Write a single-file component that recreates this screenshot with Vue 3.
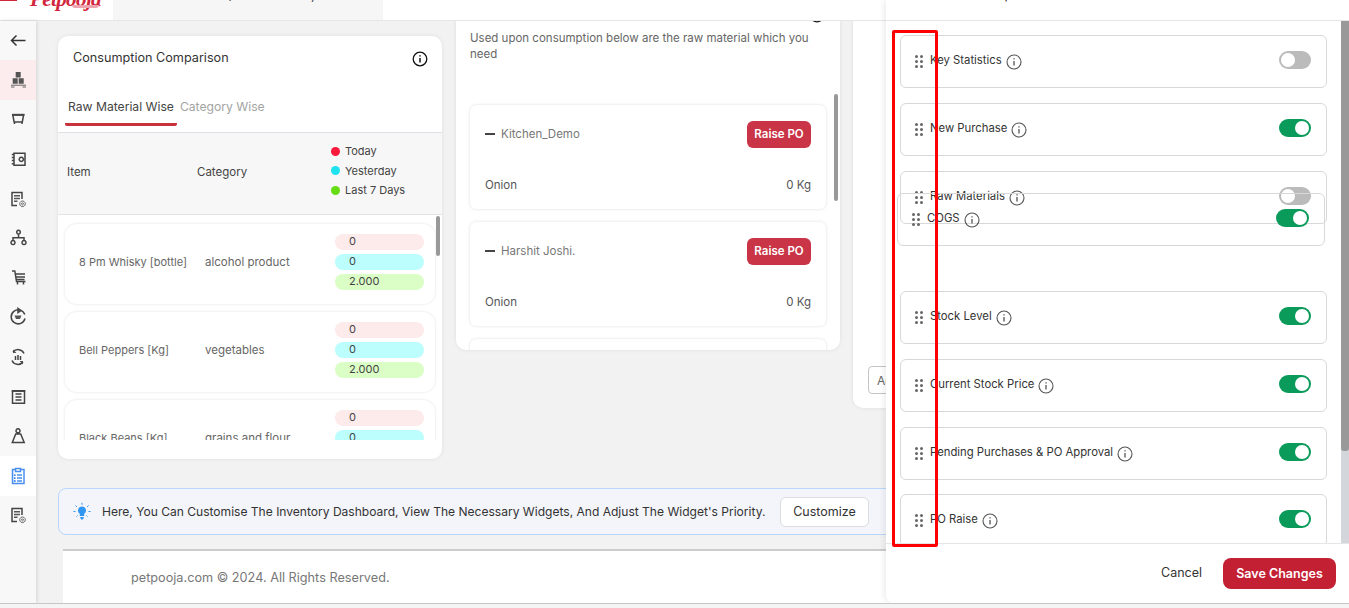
<template>
  <div class="page">
    <!-- top bar, scrolled mostly out of view -->
    <header class="topbar">
      <div class="logo">
        <span class="logo-mark"></span>
        <span class="logo-text">Petpooja</span>
        <span class="logo-swoosh"></span>
      </div>
      <div class="outlet"><span>(Kitchen Demo)</span></div>
    </header>

    <div class="body">
      <aside class="sidebar">
        <div class="side-back">
          <svg viewBox="0 0 20 20" width="20" height="20"><path d="M17.500 9.500H4M8.500 4.500l-5 5 5 5" fill="none" stroke="#333" stroke-width="1.500"/></svg>
        </div>
        <div v-for="(it, i) in sideItems" :key="i" class="side-item" :class="it.state">
          <svg viewBox="0 0 20 20" width="20" height="20">
            <path v-if="it.fill" :d="it.fill" :fill="it.state === 'current' ? '#4a8ff0' : '#555'"/>
            <path v-if="it.line" :d="it.line" fill="none" :stroke="it.state === 'current' ? '#4a8ff0' : '#444'" stroke-width="1.500"/>
            <path v-if="it.thin" :d="it.thin" fill="none" stroke="#666" stroke-width="1"/>
          </svg>
        </div>
      </aside>

      <main class="main">
        <div class="cards">
          <section class="card compare">
            <div class="compare-head">
              <h3>Consumption Comparison</h3>
              <svg class="info dark" viewBox="0 0 16 16" width="16" height="16"><circle cx="8" cy="8" r="6.800" fill="none" stroke="#111" stroke-width="1.300"/><path d="M8 7v4.600M8 4.200v1.400" stroke="#111" stroke-width="1.500"/></svg>
            </div>
            <div class="tabs">
              <span class="tab active">Raw Material Wise</span>
              <span class="tab">Category Wise</span>
            </div>
            <div class="table-head">
              <span class="col-item">Item</span>
              <span class="col-cat">Category</span>
              <div class="legend">
                <div v-for="l in legend" :key="l.label" class="legend-row"><i :style="{ background: l.color }"></i>{{ l.label }}</div>
              </div>
            </div>
            <div class="table-rows">
              <div class="thumb thumb-table"></div>
              <div v-for="r in materials" :key="r.name" class="mat-row">
                <span class="mat-name">{{ r.name }}</span>
                <span class="mat-cat">{{ r.category }}</span>
                <div class="pills">
                  <span class="pill red">0</span>
                  <span class="pill cyan">0</span>
                  <span class="pill green">2.000</span>
                </div>
              </div>
            </div>
          </section>

          <section class="card needs">
            <div class="needs-head">
              <svg viewBox="0 0 16 16" width="16" height="16"><circle cx="8" cy="8" r="6.800" fill="none" stroke="#111" stroke-width="1.300"/></svg>
            </div>
            <p class="needs-text">Used upon consumption below are the raw material which you need</p>
            <div class="needs-list">
              <div class="thumb thumb-needs"></div>
              <div v-for="k in kitchens" :key="k" class="kitchen">
                <div class="kitchen-top">
                  <span class="dash"></span>
                  <span class="kitchen-name">{{ k }}</span>
                  <button class="raise">Raise PO</button>
                </div>
                <div class="kitchen-bottom">
                  <span>Onion</span>
                  <span>0 Kg</span>
                </div>
              </div>
            </div>
          </section>

          <section class="card third">
            <button class="third-btn">Add</button>
          </section>
        </div>

        <div class="banner">
          <svg viewBox="0 0 20 20" width="20" height="20">
            <path d="M10 4.500a4 4 0 0 0-2.200 7.300V14h4.400v-2.200A4 4 0 0 0 10 4.500zM8.300 15h3.400v1.200l-1 1.300H9.300l-1-1.300z" fill="#2f96f3"/>
            <path d="M10 .8v2M3.500 3.500l1.400 1.400M16.500 3.500l-1.400 1.400M1.500 9.500h2M16.500 9.500h2M4.500 14.500l1-1M15.500 14.500l-1-1" stroke="#2f96f3" stroke-width="1"/>
          </svg>
          <span class="banner-text">Here, You Can Customise The Inventory Dashboard, View The Necessary Widgets, And Adjust The Widget's Priority.</span>
          <button class="customize">Customize</button>
        </div>

        <footer class="footer">petpooja.com © 2024. All Rights Reserved.</footer>
      </main>
    </div>

    <!-- customise drawer -->
    <aside class="drawer">
      <div class="drawer-head"><span>Dashboard Setup</span></div>
      <div class="drawer-list">
        <template v-for="w in widgets" :key="w.name">
          <div v-if="w.slot" class="drop-slot"></div>
          <div v-else class="widget">
            <span class="grip"><i v-for="n in 6" :key="n"></i></span>
            <span class="widget-name">{{ w.name }}</span>
            <svg class="info" viewBox="0 0 16 16" width="16" height="16"><circle cx="8" cy="8" r="7" fill="none" stroke="#555" stroke-width="1.100"/><path d="M8 7v4.600M8 4.300v1.300" stroke="#555" stroke-width="1.300"/></svg>
            <span class="toggle" :class="{ on: w.on }"></span>
          </div>
        </template>
        <div class="drawer-track"><div class="drawer-thumb"></div></div>
      </div>
      <div class="drawer-foot">
        <button class="cancel">Cancel</button>
        <button class="save">Save Changes</button>
      </div>

      <!-- row being dragged -->
      <div class="widget ghost">
        <span class="grip"><i v-for="n in 6" :key="n"></i></span>
        <span class="widget-name">COGS</span>
        <svg class="info" viewBox="0 0 16 16" width="16" height="16"><circle cx="8" cy="8" r="7" fill="none" stroke="#555" stroke-width="1.100"/><path d="M8 7v4.600M8 4.300v1.300" stroke="#555" stroke-width="1.300"/></svg>
        <span class="toggle on"></span>
      </div>
    </aside>

    <!-- annotation from the screenshot -->
    <div class="annotation"></div>
  </div>
</template>

<script setup>
const docGear = {
  line: 'M14 10V3.500H4v13h5',
  thin: 'M14.500 12a2.800 2.800 0 1 0 .01 0M14.500 14a.9.9 0 1 0 .01 0',
  fill: 'M6 6h6v1.400H6zM6 8.800h6v1.400H6zM6 11.600h3.500V13H6z'
}

const sideItems = [
  { state: 'active', fill: 'M7.700 2h5v5.500h-5zM4.700 8.300h5v5.500h-5zM10.700 8.300h5v5.500h-5z', thin: 'M3 15.200h15M3 17h3.500M14.500 17H18' },
  { line: 'M4.800 6h10.800l-1.300 7H6.100zM6.500 13v2M14 13v2', fill: 'M4 4.800h12.500v2H4z' },
  { line: 'M6 4.200h11v12H6zM3.800 5.500h2.500M3.800 8.500h2.500M3.800 11.500h2.500M3.800 14.800h2.500M13.300 8.200a2.100 2.100 0 1 1-.01 0' },
  docGear,
  { line: 'M10.500 6v3.500M5 13V9.700h11V13M10.500 2.300a1.800 1.800 0 1 0 .01 0M5 12.500a2 2 0 1 0 .01 0M16 12.500a2 2 0 1 0 .01 0' },
  { line: 'M4 3h2.800l1.700 10.500h9M7.500 6h9.500M8 9h9M8.500 11.500h8M9.500 14v2.500M15.500 14v2.500' },
  { line: 'M16.800 7.500A7 7 0 1 0 17 11.500M10 3V1.500L13 3.500 10 5.500z', fill: 'M6.500 8.500h7l-1.500 3.500H8z' },
  { line: 'M16 6.500A6.500 6.500 0 0 0 5 5M4 13.500A6.500 6.500 0 0 0 15 15M7.500 9v4M10 8v5M12.500 9v4', fill: 'M5 2.500v3.500h3.500zM15 17.500V14h-3.500z' },
  { line: 'M4.500 3.700h12v12.500h-12zM7.500 7h6M7.500 10h6M7.500 13h6', fill: 'M3.800 3h13.400v2H3.800z' },
  { line: 'M7.700 8h5l3.500 8.500H4.300zM10 2.800a2 2 0 1 0 .01 0' },
  { state: 'current', line: 'M7.500 3.500H4.500v14h11.500v-14H13M7.500 2.500h5V5.500h-5zM9 9h5M9 12h5M9 15h5', fill: 'M5.800 8.300h1.800v1.800H5.800zM5.800 11.200h1.800V13H5.800zM5.800 14.100h1.800v1.800H5.800z' },
  docGear
]

const legend = [
  { label: 'Today', color: '#f8193c' },
  { label: 'Yesterday', color: '#1ee3ee' },
  { label: 'Last 7 Days', color: '#66dc12' }
]

const materials = [
  { name: '8 Pm Whisky [bottle]', category: 'alcohol product' },
  { name: 'Bell Peppers [Kg]', category: 'vegetables' },
  { name: 'Black Beans [Kg]', category: 'grains and flour' }
]

const kitchens = ['Kitchen_Demo', 'Harshit Joshi.', 'Outlet']

const widgets = [
  { name: 'Key Statistics', on: false },
  { name: 'New Purchase', on: true },
  { name: 'Raw Materials', on: false },
  { name: 'slot', slot: true },
  { name: 'Stock Level', on: true },
  { name: 'Current Stock Price', on: true },
  { name: 'Pending Purchases & PO Approval', on: true },
  { name: 'PO Raise', on: true }
]
</script>

<style scoped>
.page {
  position: relative;
  width: 1349px;
  height: 604px;
  overflow: hidden;
  background: #f2f2f2;
  border-bottom: 1px solid #c6c6c6;
  box-sizing: border-box;
  display: flex;
  flex-direction: column;
  font-family: "Inter", "Open Sans", sans-serif;
  color: #444;
}

/* top bar */
.topbar {
  height: 21px;
  flex-shrink: 0;
  display: flex;
  background: #fff;
  border-bottom: 1px solid #e6e6e6;
  box-sizing: border-box;
  overflow: hidden;
}
.logo {
  position: relative;
  width: 113px;
  height: 20px;
  overflow: hidden;
}
.logo-mark {
  position: absolute;
  left: 0;
  top: 0;
  width: 17px;
  height: 1px;
  background: #d2263c;
}
.logo-text {
  position: absolute;
  left: 30px;
  top: -15px;
  font-family: "Liberation Serif", serif;
  font-style: italic;
  font-weight: 700;
  font-size: 21px;
  letter-spacing: -.6px;
  line-height: 28px;
  color: #d2263c;
}
.logo-swoosh {
  position: absolute;
  left: 72px;
  top: 5px;
  width: 27px;
  height: 3px;
  background: #eda6b0;
  border-radius: 0 0 8px 8px;
}
.outlet {
  width: 270px;
  height: 20px;
  background: #f6f6f6;
  overflow: hidden;
}
.outlet span {
  display: block;
  margin: -13px 0 0 114px;
  font-size: 12px;
  line-height: 17px;
  color: #444;
  white-space: nowrap;
}

.body {
  flex: 1;
  display: flex;
  min-height: 0;
}

/* sidebar */
.sidebar {
  width: 36px;
  flex-shrink: 0;
  background: #f8f8f8;
  box-shadow: 1px 0 4px rgba(0, 0, 0, .12);
  z-index: 1;
}
.side-back {
  height: 39px;
  display: flex;
  align-items: center;
  justify-content: center;
}
.side-item {
  height: 39.6px;
  display: flex;
  align-items: center;
  justify-content: center;
}
.side-item.active { background: #fdeced; }
.side-item.current { background: #fff; }

/* content */
.main {
  flex: 1;
  min-width: 0;
  overflow: hidden;
}
.cards {
  display: flex;
  align-items: flex-start;
  gap: 14px;
  height: 467px;
  padding: 15px 0 0 22px;
  box-sizing: border-box;
}
.card {
  width: 384px;
  flex-shrink: 0;
  background: #fff;
  border-radius: 10px;
  box-shadow: 0 0 4px rgba(0, 0, 0, .08);
  box-sizing: border-box;
}

.compare {
  height: 423px;
  overflow: hidden;
}
.compare-head {
  display: flex;
  justify-content: space-between;
  padding: 13px 14px 0 15px;
  height: 40px;
  box-sizing: border-box;
}
.compare-head h3 {
  margin: 0;
  font-size: 12.650px;
  line-height: 18px;
  font-weight: 400;
  color: #333;
}
.compare-head .info { margin-top: 2px; }
.tabs {
  display: flex;
  height: 56px;
  padding: 21px 0 0 7px;
  box-sizing: border-box;
  font-size: 12.150px;
  line-height: 20px;
}
.tab {
  height: 28px;
  color: #a4a4a4;
  padding: 0 3px;
}
.tab.active {
  color: #444;
  border-bottom: 3px solid #c8323f;
  border-radius: 0 0 2px 2px;
  height: 26px;
}
.table-head {
  display: flex;
  align-items: center;
  height: 83px;
  padding-bottom: 4px;
  background: #f7f7f7;
  border-top: 1px solid #dfe1e6;
  border-bottom: 1px solid #e4e4e4;
  box-sizing: border-box;
  font-size: 11.500px;
  color: #444;
}
.col-item { width: 139px; padding-left: 9px; box-sizing: border-box; }
.col-cat { width: 134px; }
.legend {
  display: flex;
  flex-direction: column;
  gap: 5.500px;
  margin-top: -2px;
  font-size: 11px;
}
.legend-row {
  display: flex;
  align-items: center;
  gap: 5px;
  line-height: 14px;
}
.legend-row i {
  width: 9px;
  height: 9px;
  border-radius: 50%;
}
.table-rows {
  position: relative;
  height: 225px;
  overflow: hidden;
  padding: 9px 7px 0;
  box-sizing: border-box;
}
.thumb {
  position: absolute;
  width: 4px;
  background: #999;
  border-radius: 2px;
}
.thumb-table { right: 2px; top: 1px; height: 40px; }
.mat-row {
  height: 80px;
  display: flex;
  align-items: center;
  margin-bottom: 8px;
  padding: 0 0 4px 14px;
  box-sizing: border-box;
  border-radius: 12px;
  box-shadow: 0 0 3px rgba(0, 0, 0, .12);
  font-size: 11.500px;
  color: #666;
}
.mat-name { width: 126px; white-space: nowrap; font-size: 11px; }
.mat-cat { width: 130px; white-space: nowrap; }
.pills {
  display: flex;
  flex-direction: column;
  gap: 4px;
  width: 89px;
}
.pill {
  height: 16px;
  line-height: 15px;
  border-radius: 8px;
  padding-left: 14px;
  font-size: 11px;
  color: #444;
}
.red { background: #fdeaea; }
.cyan { background: #bcfdfd; }
.green { background: #dbfdc6; }

/* needs card */
.needs {
  height: 344px;
  margin-top: -30px;
  overflow: hidden;
  position: relative;
}
.needs-head {
  height: 24px;
  padding: 0 15px 7px 0;
  box-sizing: border-box;
  display: flex;
  justify-content: flex-end;
  align-items: flex-end;
}
.needs-text {
  margin: 0;
  padding: 0 14px;
  height: 75px;
  font-size: 11.500px;
  line-height: 16px;
  box-sizing: border-box;
  color: #666;
}
.needs-list {
  padding: 0 14px;
}
.thumb-needs { right: 2px; top: 88px; height: 107px; }
.kitchen {
  height: 104px;
  margin-bottom: 13px;
  padding: 15px 15px 0;
  box-sizing: border-box;
  border-radius: 6px;
  box-shadow: 0 0 3px rgba(0, 0, 0, .14);
  font-size: 11.500px;
}
.kitchen-top {
  display: flex;
  align-items: center;
  height: 28px;
  color: #777;
}
.dash {
  width: 10px;
  height: 2px;
  background: #444;
  margin-right: 6px;
}
.kitchen-name { flex: 1; }
.raise {
  width: 64px;
  height: 27px;
  border: none;
  border-radius: 6px;
  background: #c93446;
  color: #fff;
  font: 600 11.500px "Inter", sans-serif;
  padding: 0;
}
.kitchen-bottom {
  display: flex;
  justify-content: space-between;
  margin-top: 29px;
  line-height: 16px;
  color: #555;
}

/* third card, almost all under the drawer */
.third {
  margin-left: -1px;
  height: 402px;
  margin-top: -30px;
  padding: 360px 0 0 15px;
}
.third-btn {
  width: 60px;
  height: 28px;
  background: #fff;
  border: 1px solid #c4c4c4;
  border-radius: 4px;
  font: 400 12px "Inter", sans-serif;
  color: #666;
  text-align: left;
  padding: 0 0 0 8px;
}

/* banner */
.banner {
  margin-left: 22px;
  width: 1300px;
  height: 47px;
  display: flex;
  align-items: center;
  padding-left: 13px;
  box-sizing: border-box;
  background: #f3f5fa;
  border: 1px solid #b8d6fb;
  border-radius: 8px;
}
.banner-text {
  margin-left: 10px;
  font-size: 12.050px;
  color: #333;
  white-space: nowrap;
  width: 678px;
}
.customize {
  width: 89px;
  height: 30px;
  background: #fff;
  border: 1px solid #ddd;
  border-radius: 6px;
  font: 400 12.500px "Inter", sans-serif;
  color: #333;
  padding: 0;
}
.footer {
  margin: 14px 0 0 27px;
  height: 54px;
  padding: 18px 0 0 68px;
  box-sizing: border-box;
  background: #fff;
  border-top: 2px solid #ccc;
  font-size: 12.700px;
  line-height: 18px;
  color: #777;
}

/* drawer */
.drawer {
  position: absolute;
  top: 0;
  right: 0;
  bottom: 0;
  width: 463px;
  display: flex;
  flex-direction: column;
  background: #fff;
  border-radius: 0 0 0 8px;
  box-shadow: -2px 0 6px rgba(0, 0, 0, .08);
  z-index: 2;
}
.drawer-head {
  height: 21px;
  flex-shrink: 0;
  overflow: hidden;
  border-bottom: 1px solid #e4e6ea;
  box-sizing: border-box;
}
.drawer-head span {
  display: block;
  margin: -15px 0 0 20px;
  font-size: 13px;
  line-height: 18px;
  color: #333;
}
.drawer-list {
  position: relative;
  flex: 1;
  min-height: 0;
  overflow: hidden;
  padding: 14px 22px 0 14px;
  display: flex;
  flex-direction: column;
  gap: 14.850px;
  box-sizing: border-box;
}
.drawer-track {
  position: absolute;
  top: 0;
  right: 0;
  bottom: 0;
  width: 8px;
  background: #d3d6da;
}
.drawer-thumb {
  height: 430px;
  background: #999;
  border-radius: 0 0 3px 3px;
}
.drop-slot {
  height: 37.500px;
  flex-shrink: 0;
}
.widget {
  height: 53px;
  flex-shrink: 0;
  display: flex;
  align-items: flex-start;
  padding: 15px 15px 0 14px;
  box-sizing: border-box;
  border: 1px solid #d8d8d8;
  border-radius: 6px;
  font-size: 11.300px;
  line-height: 18px;
  color: #333;
}
.grip {
  display: grid;
  grid-template-columns: 3px 3px;
  gap: 2px;
  margin: 4px 7px 0 0;
}
.grip i {
  width: 3px;
  height: 3px;
  background: #666;
  border-radius: 50%;
}
.widget-name { white-space: nowrap; }
.widget .info { margin: 3px 0 0 4px; }
.toggle {
  position: relative;
  margin-left: auto;
  width: 32px;
  height: 18px;
  border-radius: 9px;
  background: #bbb;
}
.toggle::after {
  content: "";
  position: absolute;
  top: 2px;
  left: 2px;
  width: 14px;
  height: 14px;
  border-radius: 50%;
  background: #fff;
}
.toggle.on { background: #0a9a5a; }
.toggle.on::after { left: 16px; }
.ghost {
  position: absolute;
  left: 11px;
  top: 193px;
  width: 428px;
  background: transparent;
}
.ghost .toggle { width: 33px; }
.ghost .toggle.on::after { left: 17px; }

.drawer-foot {
  height: 60px;
  flex-shrink: 0;
  display: flex;
  align-items: center;
  justify-content: flex-end;
  gap: 21px;
  padding: 0 13px 0 0;
  border-top: 1px solid #e6e6e6;
  box-sizing: border-box;
}
.cancel {
  background: none;
  border: none;
  padding: 0;
  margin-top: -2px;
  font: 400 12.500px "Inter", sans-serif;
  color: #333;
}
.save {
  width: 113px;
  height: 31px;
  border: none;
  border-radius: 8px;
  background: #c42033;
  color: #fff;
  font: 600 12.500px "Inter", sans-serif;
  padding: 0;
}

.annotation {
  position: absolute;
  left: 892px;
  top: 30px;
  width: 46px;
  height: 517px;
  box-sizing: border-box;
  border: 3px solid #f00;
  border-radius: 2px;
  z-index: 3;
  pointer-events: none;
}
</style>

<style>
html, body {
  background: #f4f4f4;
}
</style>
